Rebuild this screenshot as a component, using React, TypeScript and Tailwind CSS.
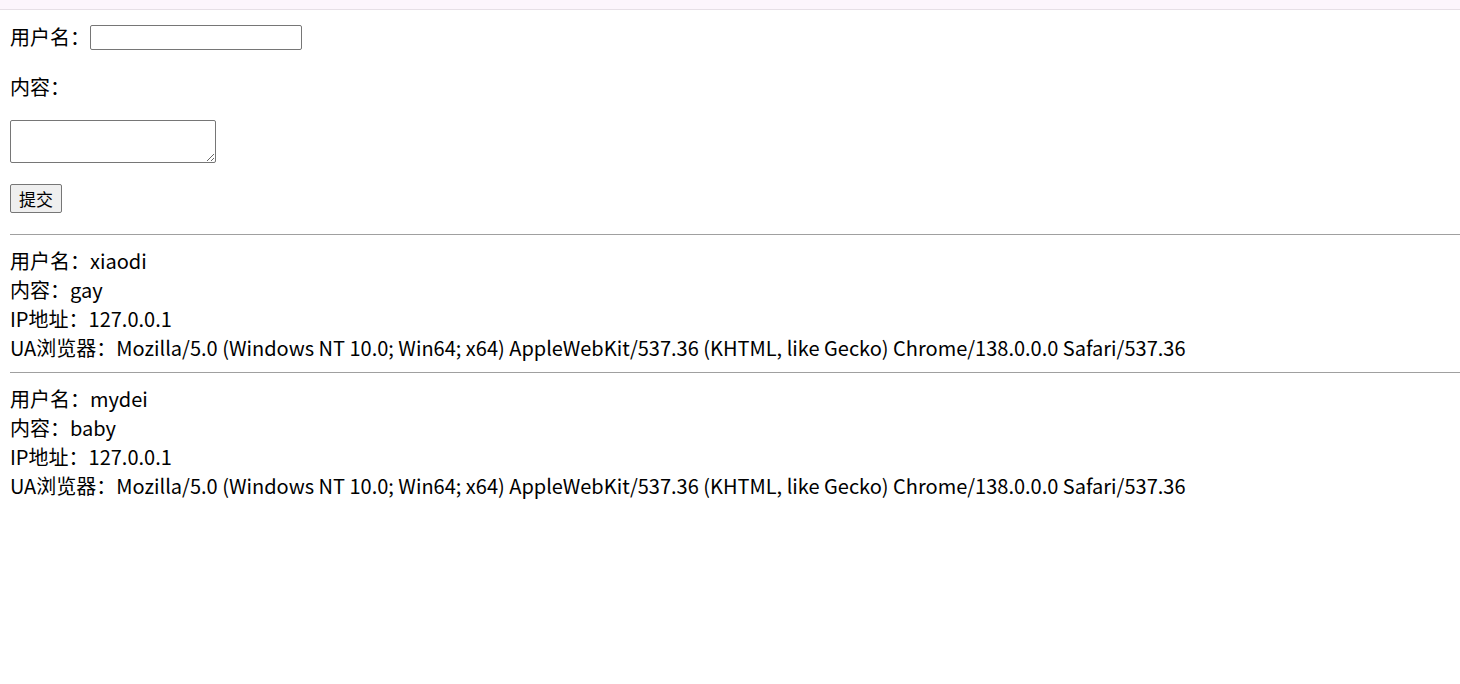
const entries = [
  { name: "xiaodi", content: "gay", ip: "127.0.0.1" },
  { name: "mydei", content: "baby", ip: "127.0.0.1" },
];

const ua =
  "Mozilla/5.0 (Windows NT 10.0; Win64; x64) AppleWebKit/537.36 (KHTML, like Gecko) Chrome/138.0.0.0 Safari/537.36";

export default function App() {
  return (
    <div className="min-h-screen bg-white text-[20px] leading-[29px] text-black [font-family:'Noto_Sans_CJK_SC','Noto_Sans',sans-serif]">
      <div className="h-[10px] border-b border-[#e6dfe6] bg-[#fcf5fc]" />
      <div className="pl-[10px]">
        <form className="flex flex-col items-start" onSubmit={(e) => e.preventDefault()}>
          <div className="mt-[15px] flex h-[25px] items-center">
            <span className="-mt-[3px]">用户名：</span>
            <input
              type="text"
              className="h-[25px] w-[212px] rounded-[2px] border border-[#767676] bg-white px-1 text-[16px]"
            />
          </div>
          <p className="mt-[22px]">内容：</p>
          <textarea className="mt-[19px] h-[43px] w-[206px] rounded-[2px] border border-[#767676] bg-white" />
          <button
            type="submit"
            className="mt-[21px] h-[29px] w-[52px] rounded-[2px] border border-[#767676] bg-[#efefef] text-[17px] leading-none"
          >
            提交
          </button>
        </form>
        {entries.map((e, i) => (
          <div key={e.name}>
            <hr className={i === 0 ? "mt-[21px] border-t border-[#a0a0a0]" : "mt-[10px] border-t border-[#a0a0a0]"} />
            <div className="mt-[11px]">
              <div>用户名：{e.name}</div>
              <div>内容：{e.content}</div>
              <div>IP地址：{e.ip}</div>
              <div>UA浏览器：{ua}</div>
            </div>
          </div>
        ))}
      </div>
    </div>
  );
}
